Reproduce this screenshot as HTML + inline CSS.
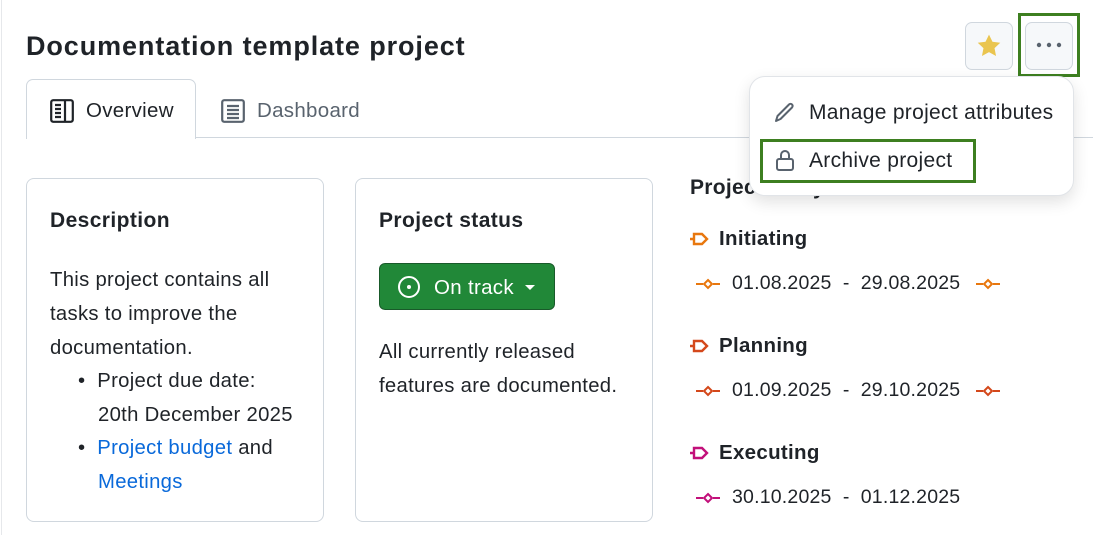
<!DOCTYPE html>
<html><head><style>
*{margin:0;padding:0;box-sizing:border-box}
body{width:1093px;height:535px;overflow:hidden;background:#fff;font-family:"Liberation Sans",sans-serif;color:#1f2328;position:relative;letter-spacing:0.3px}
.a{position:absolute}
.card{position:absolute;border:1px solid #d0d7de;border-radius:8px;background:#fff}
h2{font-size:21px;font-weight:bold;position:absolute;letter-spacing:0.4px}
.t{font-size:20.3px;line-height:34px}
.link{color:#0969da}
.d{font-size:19.5px;position:absolute;letter-spacing:0.2px}
</style></head><body>
<div class="a" style="left:1px;top:0;width:1px;height:535px;background:#e6e8eb"></div>
<div class="a" style="left:26px;top:31px;font-size:27px;font-weight:bold;letter-spacing:0.9px">Documentation template project</div>
<div class="a" style="left:965px;top:22px;width:48px;height:48px;border:1px solid #d0d7de;border-radius:7px;background:#f6f8fa"></div>
<svg class="a" style="left:976px;top:33px" width="26" height="26" viewBox="0 0 24 24"><path d="M12 1.5l3.2 6.6 7.2.9-5.3 5 1.4 7.2L12 17.7l-6.5 3.5 1.4-7.2-5.3-5 7.2-.9z" fill="#eac54f"/></svg>
<div class="a" style="left:1025px;top:22px;width:48px;height:48px;border:1px solid #d0d7de;border-radius:7px;background:#f6f8fa"></div>
<svg class="a" style="left:1035px;top:40px" width="28" height="10"><circle cx="4" cy="5" r="2.2" fill="#59636e"/><circle cx="14" cy="5" r="2.2" fill="#59636e"/><circle cx="24" cy="5" r="2.2" fill="#59636e"/></svg>
<div class="a" style="left:1018px;top:13px;width:62px;height:64px;border:3px solid #3d7f20"></div>
<div class="a" style="left:26px;top:137px;width:1067px;height:1px;background:#d0d7de"></div>
<div class="a" style="left:26px;top:79px;width:170px;height:60px;border:1px solid #d0d7de;border-bottom:none;border-radius:7px 7px 0 0;background:#fff"></div>
<svg class="a" style="left:50px;top:99px" width="24" height="24" viewBox="0 0 24 24" fill="none" stroke="#1f2328" stroke-width="2.2"><rect x="1.2" y="1.2" width="21.6" height="21.6" rx="2"/><path d="M15 1v22M5 6h6M5 10h6M5 14h6M5 18h6"/></svg>
<div class="a" style="left:86px;top:99px;font-size:20.5px">Overview</div>
<svg class="a" style="left:221px;top:99px" width="24" height="24" viewBox="0 0 24 24" fill="none" stroke="#59636e" stroke-width="2.2"><rect x="1.2" y="1.2" width="21.6" height="21.6" rx="2"/><path d="M6 7h12M6 11h12M6 15h12M6 19h12"/></svg>
<div class="a" style="left:257px;top:99px;font-size:20.5px;color:#59636e">Dashboard</div>
<div class="card" style="left:26px;top:178px;width:298px;height:344px"></div>
<h2 style="left:50px;top:209px">Description</h2>
<div class="a t" style="left:50px;top:263px">This project contains all<br>tasks to improve the<br>documentation.</div>
<div class="a t" style="left:78px;top:364px">•&nbsp;&nbsp;Project due date:</div>
<div class="a t" style="left:98px;top:398px">20th December 2025</div>
<div class="a t" style="left:78px;top:431px">•&nbsp;&nbsp;<span class="link">Project budget</span> and</div>
<div class="a t link" style="left:98px;top:465px">Meetings</div>
<div class="card" style="left:355px;top:178px;width:298px;height:344px"></div>
<h2 style="left:379px;top:209px">Project status</h2>
<div class="a" style="left:379px;top:263px;width:176px;height:47px;background:#218838;border:1px solid #195a2a;border-radius:6px"></div>
<svg class="a" style="left:397px;top:275px" width="24" height="24" viewBox="0 0 24 24" fill="none" stroke="#fff" stroke-width="2"><circle cx="12" cy="12" r="10"/><circle cx="12" cy="12" r="2" fill="#fff" stroke="none"/></svg>
<div class="a" style="left:434px;top:276px;font-size:20.5px;color:#fff">On track</div>
<div class="a" style="left:525px;top:285px;width:0;height:0;border-left:5px solid transparent;border-right:5px solid transparent;border-top:5px solid #fff"></div>
<div class="a t" style="left:379px;top:335px">All currently released<br>features are documented.</div>
<div class="a" style="left:690px;top:176px;font-size:21px;font-weight:bold">Project lifecycle</div>
<svg class="a" style="left:689px;top:230px" width="26" height="18"><path d="M1 9h4M5 4h8l5 5-5 5H5z" fill="none" stroke="#e8770e" stroke-width="2.4"/></svg>
<div class="a" style="left:719px;top:227px;font-size:20.5px;font-weight:bold">Initiating</div>
<svg class="a" style="left:696px;top:277px" width="24" height="14"><path d="M0 7h7M17 7h7M12 3l4 4-4 4-4-4z" fill="none" stroke="#e8770e" stroke-width="2"/></svg>
<div class="d" style="left:732px;top:272px">01.08.2025&nbsp;&nbsp;-&nbsp;&nbsp;29.08.2025</div>
<svg class="a" style="left:976px;top:277px" width="24" height="14"><path d="M0 7h7M17 7h7M12 3l4 4-4 4-4-4z" fill="none" stroke="#e8770e" stroke-width="2"/></svg>
<svg class="a" style="left:689px;top:337px" width="26" height="18"><path d="M1 9h4M5 4h8l5 5-5 5H5z" fill="none" stroke="#d4481b" stroke-width="2.4"/></svg>
<div class="a" style="left:719px;top:334px;font-size:20.5px;font-weight:bold">Planning</div>
<svg class="a" style="left:696px;top:384px" width="24" height="14"><path d="M0 7h7M17 7h7M12 3l4 4-4 4-4-4z" fill="none" stroke="#d4481b" stroke-width="2"/></svg>
<div class="d" style="left:732px;top:379px">01.09.2025&nbsp;&nbsp;-&nbsp;&nbsp;29.10.2025</div>
<svg class="a" style="left:976px;top:384px" width="24" height="14"><path d="M0 7h7M17 7h7M12 3l4 4-4 4-4-4z" fill="none" stroke="#d4481b" stroke-width="2"/></svg>
<svg class="a" style="left:689px;top:444px" width="26" height="18"><path d="M1 9h4M5 4h8l5 5-5 5H5z" fill="none" stroke="#c2107a" stroke-width="2.4"/></svg>
<div class="a" style="left:719px;top:441px;font-size:20.5px;font-weight:bold">Executing</div>
<svg class="a" style="left:696px;top:491px" width="24" height="14"><path d="M0 7h7M17 7h7M12 3l4 4-4 4-4-4z" fill="none" stroke="#c2107a" stroke-width="2"/></svg>
<div class="d" style="left:732px;top:486px">30.10.2025&nbsp;&nbsp;-&nbsp;&nbsp;01.12.2025</div>
<div class="a" style="left:749px;top:76px;width:325px;height:120px;background:#fff;border:1px solid #e1e4e8;border-radius:16px;box-shadow:0 6px 16px rgba(0,0,0,.12)"></div>
<svg class="a" style="left:773px;top:100px" width="24" height="24" viewBox="0 0 24 24" fill="none" stroke="#59636e" stroke-width="2" stroke-linejoin="round"><path d="M3 21l1.5-5L16 4.5a2.1 2.1 0 013 3L7.5 19z"/></svg>
<div class="a" style="left:809px;top:101px;font-size:21px">Manage project attributes</div>
<svg class="a" style="left:773px;top:148px" width="24" height="24" viewBox="0 0 24 24" fill="none" stroke="#59636e" stroke-width="2"><rect x="4" y="11" width="16" height="11" rx="2"/><path d="M8 11V7a4 4 0 018 0v4"/></svg>
<div class="a" style="left:809px;top:149px;font-size:21px">Archive project</div>
<div class="a" style="left:760px;top:139px;width:216px;height:44px;border:3px solid #3d7f20"></div>
</body></html>
